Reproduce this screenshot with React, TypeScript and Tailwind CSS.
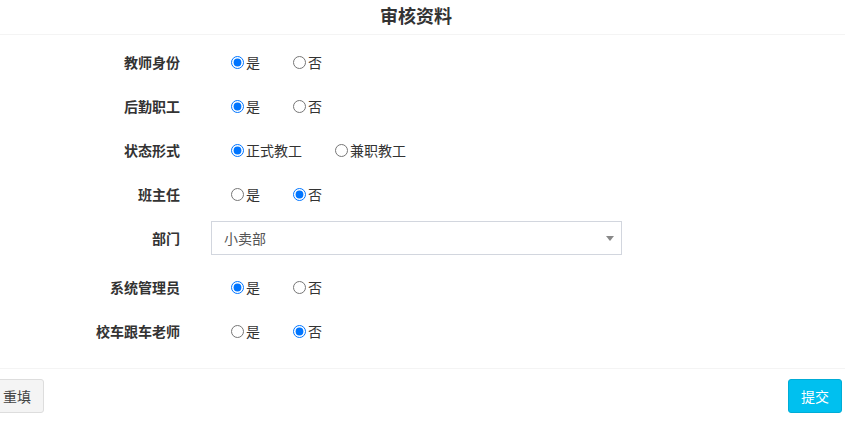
import React from "react";

type Opt = { label: string; checked: boolean };

function RadioRow({ label, name, options }: { label: string; name: string; options: Opt[] }) {
  return (
    <div className="flex h-[44px] items-center">
      <div className="w-[205px] text-right text-[14px] font-bold text-[#333]">{label}</div>
      <div className="ml-[31px] flex items-center gap-[33px] pl-[20px]">
        {options.map((o) => (
          <label key={o.label} className="flex items-center gap-[2px] text-[14px] text-[#333]">
            <input
              type="radio"
              name={name}
              defaultChecked={o.checked}
              className="m-0 h-[13px] w-[13px]"
            />
            <span>{o.label}</span>
          </label>
        ))}
      </div>
    </div>
  );
}

export default function App() {
  const yes = (y: boolean): Opt[] => [
    { label: "是", checked: y },
    { label: "否", checked: !y },
  ];
  return (
    <div
      className="w-full h-[423px] overflow-hidden bg-white"
      style={{ fontFamily: '"Noto Sans CJK SC", "Noto Sans", sans-serif' }}
    >
      <div className="ml-[-25px] w-[882px]">
        <div className="flex h-[35px] items-center justify-center border-b border-[#f4f4f4] pb-[3px]">
          <span className="text-[18px] font-bold text-[#333]">审核资料</span>
        </div>
        <div className="pt-[5px] pb-[15px]">
          <RadioRow label="教师身份" name="a" options={yes(true)} />
          <RadioRow label="后勤职工" name="b" options={yes(true)} />
          <RadioRow
            label="状态形式"
            name="c"
            options={[
              { label: "正式教工", checked: true },
              { label: "兼职教工", checked: false },
            ]}
          />
          <RadioRow label="班主任" name="d" options={yes(false)} />
          <div className="flex h-[49px] items-start pt-[5px]">
            <div className="flex h-[34px] w-[205px] items-center justify-end text-[14px] font-bold text-[#333]">
              部门
            </div>
            <div className="relative ml-[31px] flex h-[34px] w-[411px] items-center border border-[#d2d6de] bg-white pl-[12px] text-[14px] text-[#555]">
              小卖部
              <span className="absolute right-[7px] top-[14px] h-0 w-0 border-x-[4px] border-t-[5px] border-x-transparent border-t-[#888]" />
            </div>
          </div>
          <RadioRow label="系统管理员" name="e" options={yes(true)} />
          <RadioRow label="校车跟车老师" name="f" options={yes(false)} />
        </div>
        <div className="flex items-start justify-between border-t border-[#f4f4f4] px-[15px] pt-[10px]">
          <button className="h-[34px] rounded-[3px] border border-[#ddd] bg-[#f4f4f4] px-[12px] text-[14px] text-[#444]">
            重填
          </button>
          <button className="h-[34px] rounded-[3px] border border-[#00acd6] bg-[#00c0ef] px-[12px] text-[14px] text-white">
            提交
          </button>
        </div>
      </div>
    </div>
  );
}
